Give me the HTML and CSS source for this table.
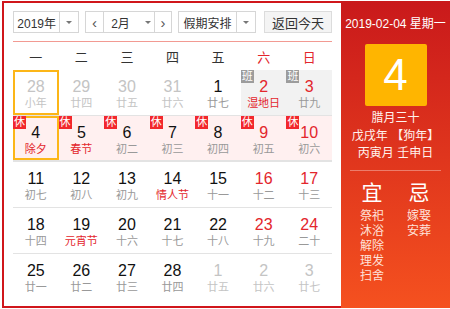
FILE: index.html
```html
<!DOCTYPE html>
<html lang="zh">
<head>
<meta charset="utf-8">
<title>万年历</title>
<link rel="stylesheet" href="styles.css">
</head>
<body>
<div class="cal">
  <div class="main">
    <div class="toolbar">
      <div class="sel sel-year"><span class="sel-text">2019年</span><span class="sel-arrow"><i class="tri"></i></span></div>
      <div class="sel sel-month">
        <span class="nav">&lsaquo;</span>
        <span class="sel-text month-text">2月<i class="tri"></i></span>
        <span class="nav nav-r">&rsaquo;</span>
      </div>
      <div class="sel sel-hol"><span class="sel-text">假期安排</span><span class="sel-arrow"><i class="tri"></i></span></div>
      <div class="btn-today">返回今天</div>
    </div>
    <div class="weekdays">
      <span>一</span><span>二</span><span>三</span><span>四</span><span>五</span><span class="we">六</span><span class="we">日</span>
    </div>
    <div class="row">
      <div class="cell other sel-box"><b>28</b><em>小年</em></div>
      <div class="cell other"><b>29</b><em>廿四</em></div>
      <div class="cell other"><b>30</b><em>廿五</em></div>
      <div class="cell other"><b>31</b><em>廿六</em></div>
      <div class="cell"><b>1</b><em>廿七</em></div>
      <div class="cell work we"><i class="tag ban">班</i><b>2</b><em class="fest">湿地日</em></div>
      <div class="cell work we"><i class="tag ban">班</i><b>3</b><em>廿九</em></div>
    </div>
    <div class="row rest">
      <div class="cell sel-box"><i class="tag xiu">休</i><b>4</b><em class="fest">除夕</em></div>
      <div class="cell"><i class="tag xiu">休</i><b>5</b><em class="fest">春节</em></div>
      <div class="cell"><i class="tag xiu">休</i><b>6</b><em>初二</em></div>
      <div class="cell"><i class="tag xiu">休</i><b>7</b><em>初三</em></div>
      <div class="cell"><i class="tag xiu">休</i><b>8</b><em>初四</em></div>
      <div class="cell we"><i class="tag xiu">休</i><b>9</b><em>初五</em></div>
      <div class="cell we"><i class="tag xiu">休</i><b>10</b><em>初六</em></div>
    </div>
    <div class="row">
      <div class="cell"><b>11</b><em>初七</em></div>
      <div class="cell"><b>12</b><em>初八</em></div>
      <div class="cell"><b>13</b><em>初九</em></div>
      <div class="cell"><b>14</b><em class="fest">情人节</em></div>
      <div class="cell"><b>15</b><em>十一</em></div>
      <div class="cell we"><b>16</b><em>十二</em></div>
      <div class="cell we"><b>17</b><em>十三</em></div>
    </div>
    <div class="row">
      <div class="cell"><b>18</b><em>十四</em></div>
      <div class="cell"><b>19</b><em class="fest">元宵节</em></div>
      <div class="cell"><b>20</b><em>十六</em></div>
      <div class="cell"><b>21</b><em>十七</em></div>
      <div class="cell"><b>22</b><em>十八</em></div>
      <div class="cell we"><b>23</b><em>十九</em></div>
      <div class="cell we"><b>24</b><em>二十</em></div>
    </div>
    <div class="row last">
      <div class="cell"><b>25</b><em>廿一</em></div>
      <div class="cell"><b>26</b><em>廿二</em></div>
      <div class="cell"><b>27</b><em>廿三</em></div>
      <div class="cell"><b>28</b><em>廿四</em></div>
      <div class="cell other"><b>1</b><em>廿五</em></div>
      <div class="cell other"><b>2</b><em>廿六</em></div>
      <div class="cell other"><b>3</b><em>廿七</em></div>
    </div>
  </div>
  <div class="side">
    <div class="side-date">2019-02-04 星期一</div>
    <div class="big-day">4</div>
    <div class="lunar">腊月三十</div>
    <div class="lunar">戊戌年 【狗年】</div>
    <div class="lunar">丙寅月 壬申日</div>
    <div class="side-line"></div>
    <div class="yiji">
      <div class="col">
        <div class="yj-title">宜</div>
        <div class="yj-item">祭祀</div>
        <div class="yj-item">沐浴</div>
        <div class="yj-item">解除</div>
        <div class="yj-item">理发</div>
        <div class="yj-item">扫舍</div>
      </div>
      <div class="col">
        <div class="yj-title">忌</div>
        <div class="yj-item">嫁娶</div>
        <div class="yj-item">安葬</div>
      </div>
    </div>
  </div>
</div>
</body>
</html>
```
FILE: styles.css
```css
* { box-sizing: border-box; }
html, body { margin: 0; padding: 0; background: #fff; }
body {
  font-family: "Liberation Sans", "Noto Sans CJK SC", sans-serif;
  color: #333;
}
.cal {
  display: flex;
  width: 448px;
  height: 307px;
  margin: 1px 0 0 2px;
  border: 2px solid #d0161b;
  border-right: 0;
}
.main {
  width: 337px;
  padding: 8px 0 0 9px;
}
.toolbar {
  display: flex;
  align-items: center;
  height: 22px;
  width: 320px;
  font-size: 12px;
}
.sel {
  display: flex;
  height: 22px;
  border: 1px solid #d6d6d6;
  background: #fff;
  color: #333;
}
.sel-text {
  display: flex;
  align-items: center;
  justify-content: center;
}
.sel-arrow {
  display: flex;
  align-items: center;
  justify-content: center;
  width: 19px;
  border-left: 1px solid #d6d6d6;
}
.tri {
  display: inline-block;
  width: 0;
  height: 0;
  border-left: 3px solid transparent;
  border-right: 3px solid transparent;
  border-top: 3px solid #777;
}
.sel-year { width: 66px; }
.sel-year .sel-text { width: 46px; }
.sel-month { width: 87px; margin-left: 6px; }
.nav {
  display: flex;
  align-items: center;
  justify-content: center;
  width: 18px;
  font-size: 15px;
  color: #555;
  border-right: 1px solid #d6d6d6;
}
.nav-r { border-right: 0; border-left: 1px solid #d6d6d6; width: 17px; }
.month-text { width: 50px; gap: 15px; padding-left: 4px; }
.sel-hol { width: 78px; margin-left: 6px; }
.sel-hol .sel-text { width: 58px; }
.btn-today {
  display: flex;
  align-items: center;
  justify-content: center;
  width: 68px;
  height: 22px;
  margin-left: 8px;
  border: 1px solid #dcdcdc;
  background: #f4f4f4;
  color: #333;
  font-size: 13px;
}
.weekdays {
  display: grid;
  grid-template-columns: repeat(7, 1fr);
  width: 319px;
  margin-top: 8px;
  border-top: 1px solid #f29a92;
  height: 29px;
  align-items: center;
  font-size: 13px;
  color: #333;
  text-align: center;
}
.weekdays .we { color: #e3262c; }
.row {
  display: grid;
  grid-template-columns: repeat(7, 1fr);
  width: 319px;
  height: 46px;
  border-bottom: 1px solid #e3e3e3;
}
.row.rest { background: #fff0f0; border-bottom: 2px solid #e3e3e3; }
.row.last { border-bottom: 0; }
.cell {
  position: relative;
  display: flex;
  flex-direction: column;
  align-items: center;
  padding-top: 7px;
  border: 2px solid transparent;
}
.cell b {
  font-weight: normal;
  font-size: 16px;
  line-height: 16px;
  color: #111;
}
.cell em {
  font-style: normal;
  font-size: 11px;
  line-height: 14px;
  margin-top: 1px;
  color: #999;
}
.cell.we b { color: #e3262c; }
.cell.work { background: #f2f2f2; }
.cell em.fest { color: #e3262c; }
.cell.other b, .cell.other em { color: #c4c4c4; }
.sel-box { border-color: #fcb618; }
.tag {
  position: absolute;
  left: -2px;
  top: -2px;
  width: 13px;
  height: 13px;
  font-style: normal;
  font-size: 11px;
  line-height: 13px;
  text-align: center;
  color: #fff;
}
.tag.ban { background: #9c9c9c; }
.tag.xiu { background: #f2272c; }
.side {
  flex: 1;
  display: flex;
  flex-direction: column;
  align-items: center;
  background: linear-gradient(#c9191b, #f5511f);
  color: #fff;
  margin-top: -2px;
  margin-bottom: -2px;
  padding-top: 15px;
}
.side-date { font-size: 12px; line-height: 16px; }
.big-day {
  display: flex;
  align-items: center;
  justify-content: center;
  width: 62px;
  height: 62px;
  margin-top: 12px;
  margin-bottom: 4px;
  background: #ffb500;
  border-radius: 2px;
  font-size: 44px;
  color: #fff;
}
.lunar { font-size: 12px; line-height: 17.5px; color: #fff2ee; }
.side-line {
  width: 91px;
  height: 1px;
  margin-top: 7px;
  background: rgba(255, 255, 255, 0.35);
}
.yiji {
  display: flex;
  gap: 23px;
  margin-top: 8px;
}
.col { display: flex; flex-direction: column; align-items: center; }
.yj-title { font-size: 21px; line-height: 28px; margin-bottom: 2px; }
.yj-item { font-size: 12px; line-height: 15px; color: #ffe2da; }
```
